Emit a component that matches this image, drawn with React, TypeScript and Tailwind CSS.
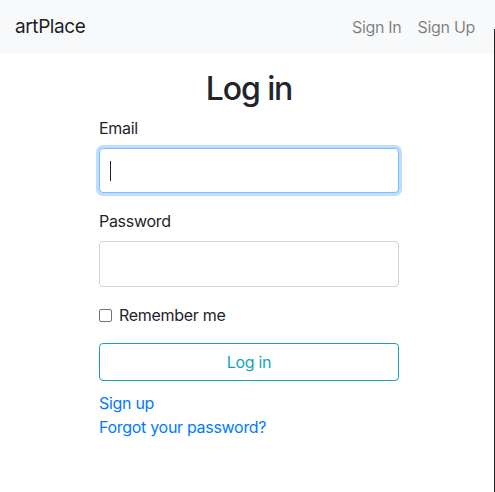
export default function App() {
  return (
    <div className="relative min-h-[492px] bg-white font-['Inter',sans-serif] tracking-[-0.3px] text-[#212529]">
      <nav className="flex h-[54px] items-center justify-between bg-[#f8f9fa] pl-[15px] pr-4">
        <a className="text-[19px] leading-[30px] tracking-[-0.4px] text-black/90">artPlace</a>
        <div className="flex text-[16px] text-black/50">
          <a className="px-2">Sign In</a>
          <a className="pl-2 pr-[4px]">Sign Up</a>
        </div>
      </nav>

      <div className="ml-[99px] w-[300px] pt-4">
        <h2 className="mb-2 text-center text-[32px] font-medium leading-[38px] tracking-[-1.1px]">Log in</h2>

        <form className="flex flex-col">
          <label className="mb-2 text-[16px] leading-6">Email</label>
          <div className="relative mb-4 h-[45px] rounded-[4px] border border-[#80bdff] bg-white shadow-[0_0_0_3px_rgba(0,123,255,0.25)]">
            <span className="absolute left-[10px] top-[12px] h-[20px] w-px bg-[#212529]" />
          </div>

          <label className="mb-2 text-[16px] leading-6">Password</label>
          <div className="mb-4 h-[46px] rounded-[4px] border border-[#ced4da] bg-white" />

          <label className="mb-4 flex h-6 items-center gap-[7px] text-[16px]">
            <span className="h-[13px] w-[13px] rounded-[2px] border border-[#767676] bg-white" />
            Remember me
          </label>

          <button
            type="button"
            className="h-[38px] rounded-[4px] border border-[#17a2b8] text-[16px] text-[#17a2b8]"
          >
            Log in
          </button>

          <div className="mt-[10px] flex flex-col text-[16px] leading-6 text-[#007bff]">
            <a>Sign up</a>
            <a>Forgot your password?</a>
          </div>
        </form>
      </div>

      <div className="absolute bottom-0 right-0 top-[29px] w-px bg-[#222]" />
    </div>
  )
}
